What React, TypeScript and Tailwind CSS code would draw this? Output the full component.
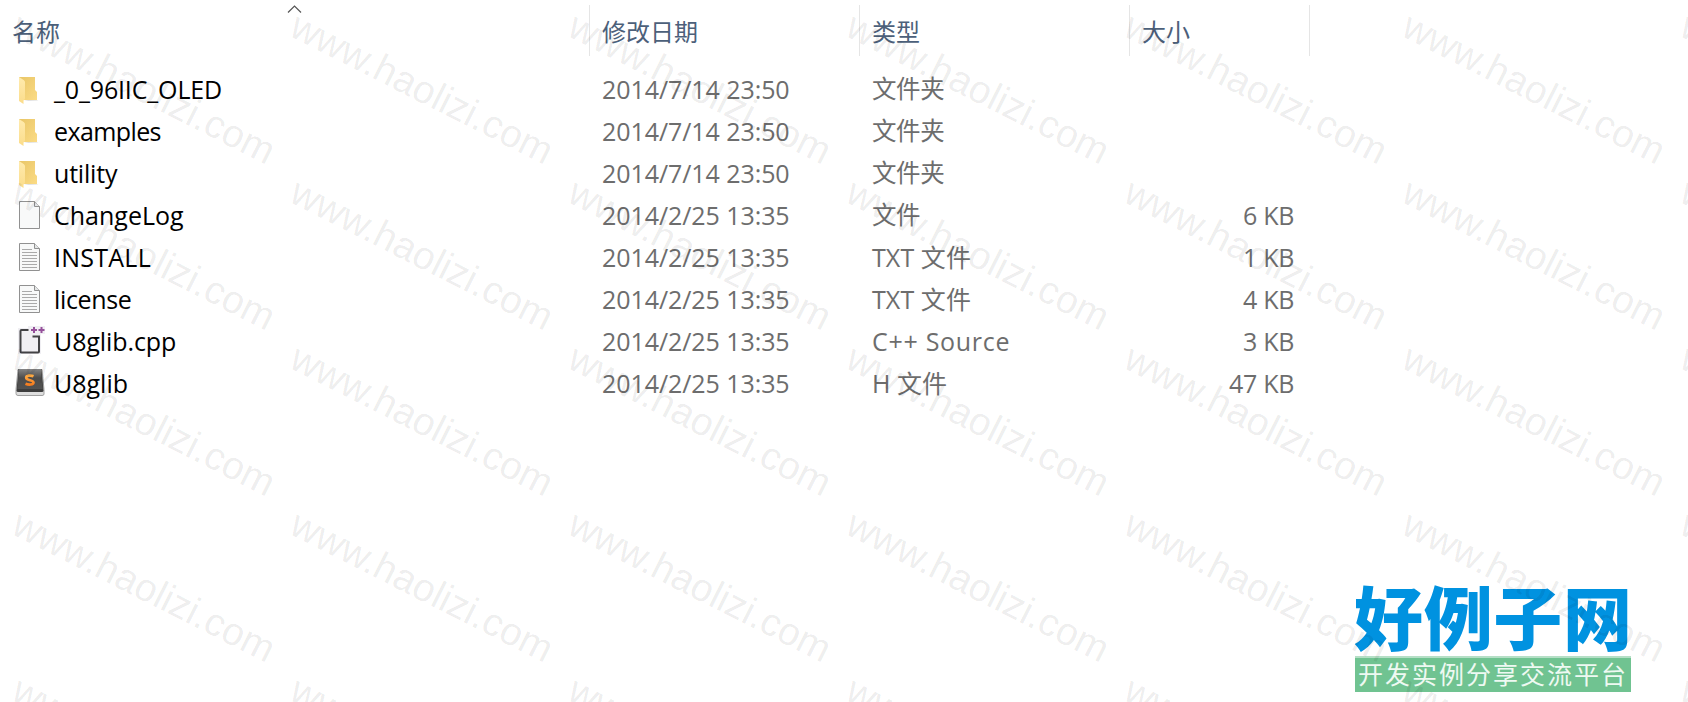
import { ReactNode } from 'react'

type IconKind = 'folder' | 'blank' | 'text' | 'cpp' | 'sublime'

interface FileRow {
  name: string
  icon: IconKind
  date: string
  type: string
  size?: string
  // tracking for the name and type cells
  nameClass: string
  typeClass: string
}

const files: FileRow[] = [
  { name: '_0_96IIC_OLED', icon: 'folder', date: '2014/7/14 23:50', type: '文件夹', nameClass: 'tracking-[-0.15px]', typeClass: 'text-[24.500px] tracking-[-0.4px]' },
  { name: 'examples', icon: 'folder', date: '2014/7/14 23:50', type: '文件夹', nameClass: 'tracking-[-0.6px]', typeClass: 'text-[24.500px] tracking-[-0.4px]' },
  { name: 'utility', icon: 'folder', date: '2014/7/14 23:50', type: '文件夹', nameClass: 'tracking-[-0.2px]', typeClass: 'text-[24.500px] tracking-[-0.4px]' },
  { name: 'ChangeLog', icon: 'blank', date: '2014/2/25 13:35', type: '文件', size: '6 KB', nameClass: '', typeClass: 'text-[24.500px] tracking-[-0.4px]' },
  { name: 'INSTALL', icon: 'text', date: '2014/2/25 13:35', type: 'TXT 文件', size: '1 KB', nameClass: 'tracking-[0.25px]', typeClass: 'tracking-[0.1px]' },
  { name: 'license', icon: 'text', date: '2014/2/25 13:35', type: 'TXT 文件', size: '4 KB', nameClass: 'tracking-[-0.35px]', typeClass: 'tracking-[0.1px]' },
  { name: 'U8glib.cpp', icon: 'cpp', date: '2014/2/25 13:35', type: 'C++ Source', size: '3 KB', nameClass: 'tracking-[-0.1px]', typeClass: 'tracking-[0.7px]' },
  { name: 'U8glib', icon: 'sublime', date: '2014/2/25 13:35', type: 'H 文件', size: '47 KB', nameClass: '', typeClass: '' },
]

const watermarks = Array.from({ length: 35 }, (_, i) => i)

function FolderIcon() {
  return (
    <svg className="block" width="32" height="32" viewBox="0 0 32 32">
      <defs>
        <linearGradient id="folderBack" x1="0" y1="0" x2="1" y2="1">
          <stop offset="0" stopColor="#e9c667" />
          <stop offset="1" stopColor="#fbdb85" />
        </linearGradient>
        <linearGradient id="folderFront" x1="0" y1="0" x2="0" y2="1">
          <stop offset="0" stopColor="#ffebae" />
          <stop offset="1" stopColor="#fbdc8a" />
        </linearGradient>
      </defs>
      <path d="M10 26h13l1.500 .6-10 .4z" fill="#000" opacity=".12" />
      <path d="M5 3h16v13l2 2v8H5z" fill="url(#folderBack)" />
      <path d="M5 3l5 3.200 1 1.500V25l-1.500 1.500V30L5 27z" fill="url(#folderFront)" />
    </svg>
  )
}

function PageIcon({ lines }: { lines?: boolean }) {
  return (
    <svg className="block" width="32" height="32" viewBox="0 0 32 32">
      <path d="M5.500 1.500h15l5 5v22h-20z" fill="#f8f9f9" stroke="#919191" />
      <path d="M20.500 1.500v5h5" fill="#e4e6e6" stroke="#919191" />
      {lines && (
        <path d="M8 7.500h10M8 10.500h15M8 13.500h15M8 16.500h15M8 19.500h15M8 22.500h15M8 25.500h15" stroke="#aaa" fill="none" />
      )}
    </svg>
  )
}

function CppIcon() {
  return (
    <svg className="block" width="32" height="32" viewBox="0 0 32 32">
      <path d="M4 2h10V0h17v8h-4v20H4z" fill="#f0eff3" />
      <path d="M14.500 4H7.500Q6.500 4 6.500 5v20.500Q6.500 26.500 7.500 26.500h16.500Q25 26.500 25 25.500V10.500H18.500" fill="none" stroke="#424245" strokeWidth="2" />
      <path d="M17 4h6M20 1v6M24.500 4h6M27.500 1v6" stroke="#96519b" strokeWidth="2" />
    </svg>
  )
}

function SublimeIcon() {
  return (
    <svg className="block" width="32" height="32" viewBox="0 0 32 32">
      <defs>
        <linearGradient id="keyTop" x1="0" y1="0" x2="0" y2="1">
          <stop offset="0" stopColor="#858585" />
          <stop offset=".45" stopColor="#4c4c4c" />
          <stop offset="1" stopColor="#525252" />
        </linearGradient>
        <linearGradient id="keyLetter" x1="0" y1="0" x2="0" y2="1">
          <stop offset="0" stopColor="#ffab43" />
          <stop offset="1" stopColor="#f57d20" />
        </linearGradient>
      </defs>
      <path d="M4 1.500h24l2 20v4.500q0 1.500-2 1.500H4q-2 0-2-2v-4z" fill="#dedede" stroke="#a0a0a0" />
      <path d="M4.500 1h23l2 21.500q0 1.500-1.500 1.500H4q-1.500 0-1.500-1.500z" fill="#3d3d3d" />
      <path d="M5 1h22l1.700 20H3.300z" fill="url(#keyTop)" />
      <path d="M19.500 8.300C17 7.200 12.200 7.300 12.200 9.800c0 3 7.300 1.900 7.300 4.700 0 2.500-5.200 2.400-8 1.200" fill="none" stroke="url(#keyLetter)" strokeWidth="2.700" />
    </svg>
  )
}

function FileIcon({ kind }: { kind: IconKind }) {
  if (kind === 'folder') return <FolderIcon />
  if (kind === 'cpp') return <CppIcon />
  if (kind === 'sublime') return <SublimeIcon />
  return <PageIcon lines={kind === 'text'} />
}

function HeaderCell({ className, children }: { className: string; children: ReactNode }) {
  return (
    <div className={`flex h-[51px] shrink-0 items-center border-r border-[#e5e5e5] pt-[2px] text-[24px] text-[#4c607a] ${className}`}>
      {children}
    </div>
  )
}

export default function App() {
  return (
    <div className="relative h-[702px] w-[1688px] overflow-hidden bg-white font-['Open_Sans','Noto_Sans_CJK_SC',sans-serif] text-[25px] leading-[42px]">
      <header className="relative flex pt-[5px]">
        <HeaderCell className="w-[590px] pl-3">名称</HeaderCell>
        <HeaderCell className="w-[270px] pl-3">修改日期</HeaderCell>
        <HeaderCell className="w-[270px] pl-3">类型</HeaderCell>
        <HeaderCell className="w-[180px] pl-3">大小</HeaderCell>
        <svg className="absolute left-[287px] top-[5px]" width="15" height="9" viewBox="0 0 15 9">
          <path d="M1 7.500l6.500-6.500 6.500 6.500" fill="none" stroke="#555" strokeWidth="1.200" />
        </svg>
      </header>

      <main className="pt-3">
        {files.map((file) => (
          <div key={file.name + file.icon} className="flex h-[42px] items-center whitespace-pre">
            <div className="flex w-[602px] items-start pl-[14px]">
              <div className="pt-[6px]">
                <FileIcon kind={file.icon} />
              </div>
              <span className={`pl-2 text-black ${file.nameClass}`}>{file.name}</span>
            </div>
            <span className="w-[270px] tracking-[-0.07px] text-[#6d6d6d]">{file.date}</span>
            <span className={`w-[270px] text-[#6d6d6d] ${file.typeClass}`}>{file.type}</span>
            <span className="w-[152px] text-right tracking-[-0.3px] text-[#6d6d6d]">{file.size}</span>
          </div>
        ))}
      </main>

      {/* Site logo */}
      <div className="absolute left-[1354px] top-[581px] w-[278px] font-['Noto_Sans_CJK_SC',sans-serif]">
        <div className="flex h-[75px] justify-between text-[69px] font-black leading-[69px] text-[#0092e0]">
          <span>好</span>
          <span>例</span>
          <span>子</span>
          <span>网</span>
        </div>
        <div className="mx-px h-9 whitespace-nowrap border-t-2 border-[#b5dfc6] bg-[#70c391] pl-[3px] text-[25px] leading-[30px] tracking-[2px] text-[#eef9f2]">
          开发实例分享交流平台
        </div>
      </div>

      {/* Watermark tiles */}
      <div className="pointer-events-none absolute left-[9px] top-[2px] grid grid-cols-[repeat(7,278px)] auto-rows-[166px] font-['Liberation_Sans',sans-serif] text-[39px] leading-[40px] text-black/8">
        {watermarks.map((i) => (
          <span key={i} className="h-10 w-[278px] origin-[0_34px] rotate-[26.800deg] whitespace-nowrap">
            www.haolizi.com
          </span>
        ))}
      </div>
    </div>
  )
}
